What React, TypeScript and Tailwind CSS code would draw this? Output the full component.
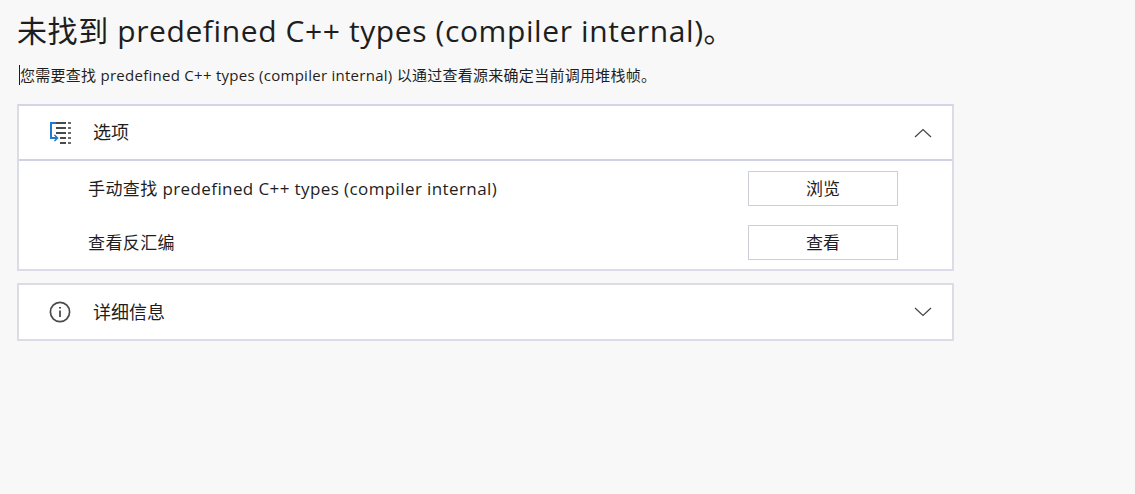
const fontStack = { fontFamily: '"Open Sans", "Noto Sans CJK SC", sans-serif' };

function OptionsIcon() {
  return (
    <svg width="22" height="22" viewBox="0 0 22 22" fill="none">
      <path d="M7 1H2V16H8" stroke="#2378cc" strokeWidth="2" />
      <path d="M5.5 13L8.5 16L5.5 19" stroke="#2378cc" strokeWidth="1.6" />
      <path d="M7 1h10M7 6h10M7 11h10M11 16h6M11 21h6" stroke="#4a4a4a" strokeWidth="2" />
      <path d="M19 1h3M19 6h3M19 11h3M19 16h3M19 21h3" stroke="#6a6a6a" strokeWidth="2" />
    </svg>
  );
}

function InfoIcon() {
  return (
    <svg width="22" height="22" viewBox="0 0 22 22" fill="none">
      <circle cx="11" cy="11" r="9.6" stroke="#4a4a4a" strokeWidth="1.7" />
      <path d="M11 9.5V16" stroke="#2a2a2a" strokeWidth="1.5" />
      <path d="M11 6V7.6" stroke="#2a2a2a" strokeWidth="1.7" />
    </svg>
  );
}

function Chevron({ up }: { up?: boolean }) {
  return (
    <svg width="18" height="10" viewBox="0 0 18 10" fill="none">
      <path d={up ? 'M1 9L9 1.5L17 9' : 'M1 1L9 8.5L17 1'} stroke="#444" strokeWidth="1.2" />
    </svg>
  );
}

function OptionRow({ label, action }: { label: string; action: string }) {
  return (
    <div className="flex h-[54px] items-center justify-between pl-[69px] pr-[54px]">
      <span className="pt-[2px] text-[17px] tracking-[0.4px] text-[#1e1e1e]">{label}</span>
      <button className="h-[35px] w-[150px] border border-[#ccceDB] bg-white pt-[2px] text-[17px] text-[#1e1e1e]">
        {action}
      </button>
    </div>
  );
}

export default function App() {
  return (
    <div className="h-[494px] w-[1135px] overflow-hidden bg-[#f8f8f8] pl-[17px] pt-[9px]" style={fontStack}>
      <h1 className="text-[30px] leading-[44px] tracking-[0.6px] text-[#1e1e1e]">未找到 predefined C++ types (compiler internal)。</h1>
      <p className="ml-[2px] mt-[12px] border-l border-[#1e1e1e] text-[15px] leading-[20px] tracking-[0.27px] text-[#1e1e1e]">
        您需要查找 predefined C++ types (compiler internal) 以通过查看源来确定当前调用堆栈帧。
      </p>

      <section className="mt-[19px] w-[937px] border-2 border-[#dcdce8] border-t-[#d4d5e4] bg-white">
        <div className="flex h-[55px] items-center border-b-2 border-[#d0d1e2] pl-[30px] pr-[20px]">
          <OptionsIcon />
          <span className="ml-[22px] text-[18px] text-[#1e1e1e]">选项</span>
          <span className="ml-auto"><Chevron up /></span>
        </div>
        <OptionRow label="手动查找 predefined C++ types (compiler internal)" action="浏览" />
        <OptionRow label="查看反汇编" action="查看" />
      </section>

      <section className="mt-[12px] w-[937px] border-2 border-[#dcdce8] bg-white">
        <div className="flex h-[54px] items-center pl-[30px] pr-[20px]">
          <InfoIcon />
          <span className="ml-[22px] text-[18px] text-[#1e1e1e]">详细信息</span>
          <span className="ml-auto"><Chevron /></span>
        </div>
      </section>
    </div>
  );
}
